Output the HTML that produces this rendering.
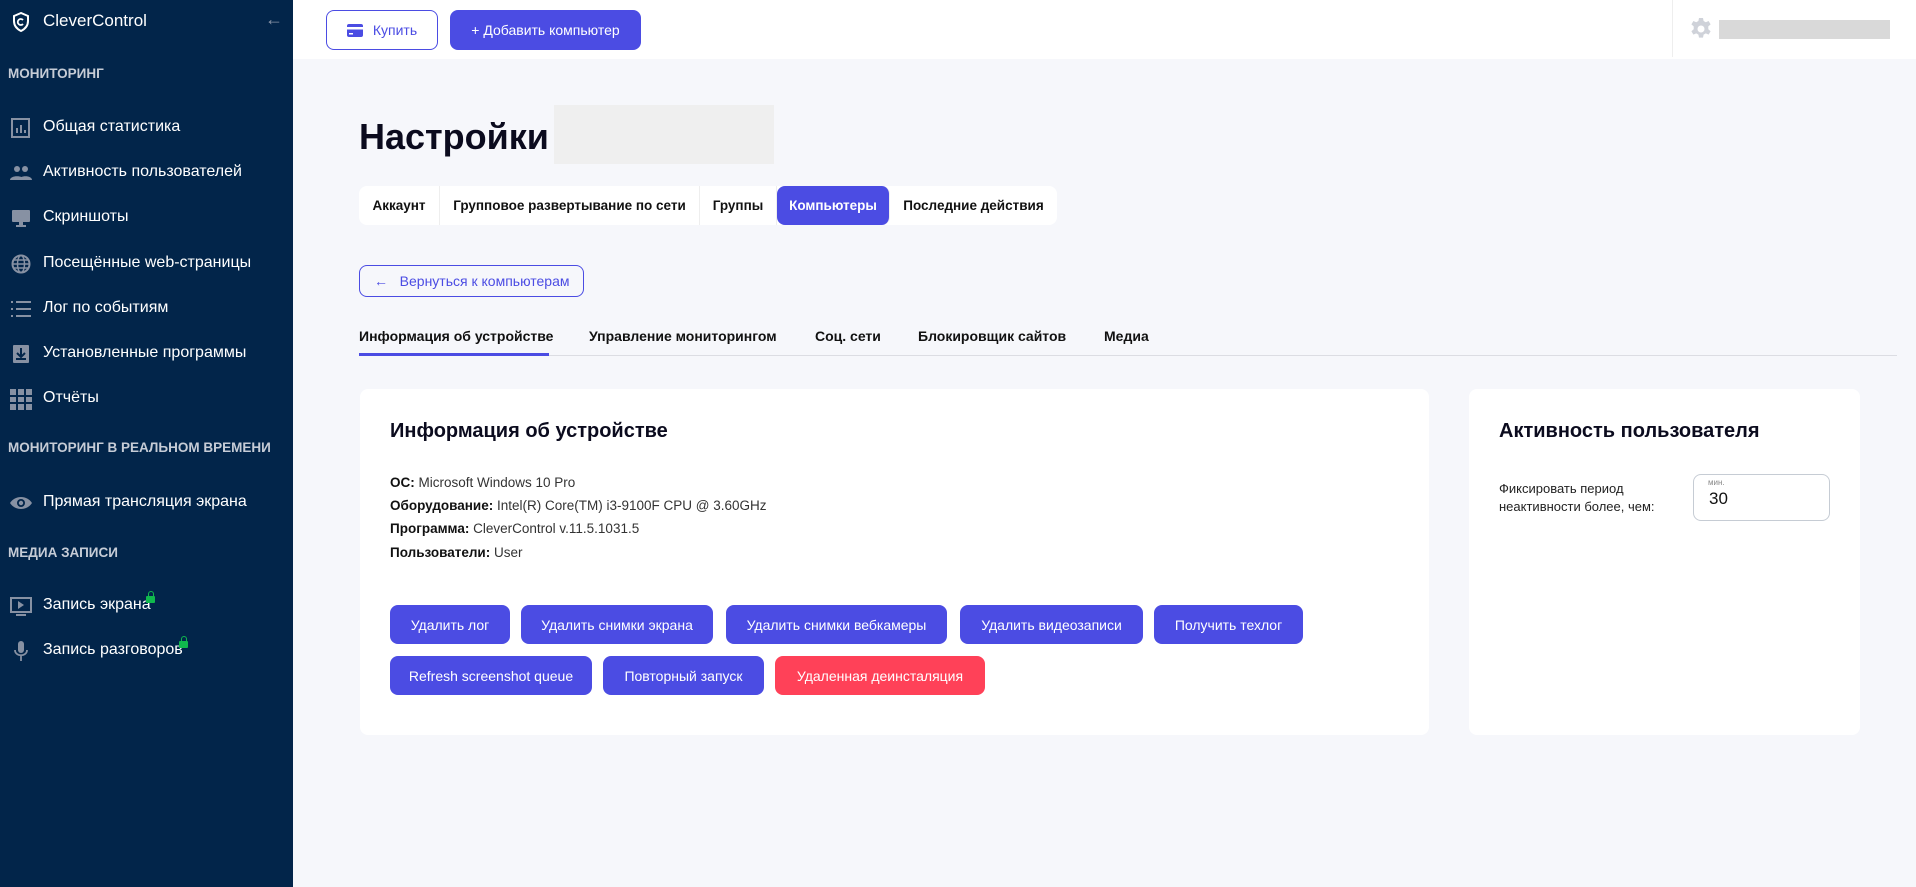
<!DOCTYPE html>
<html><head><meta charset="utf-8"><style>
*{box-sizing:border-box;margin:0;padding:0}
body{width:1916px;height:887px;overflow:hidden;font-family:"Liberation Sans",sans-serif;background:#f6f7fb;position:relative;color:#111}
.abs{position:absolute}
#sb{left:0;top:0;width:293px;height:887px;background:#02254a;color:#fff}
.sec{position:absolute;left:8px;font-size:13.5px;font-weight:bold;color:#c6ccd6;white-space:nowrap}
.it{position:absolute;left:0;font-size:16px;color:#fff;display:flex;align-items:center}
.it svg{position:absolute;left:10px;width:22px;height:22px;top:-9px}
.it span{position:absolute;left:43px;white-space:nowrap;top:-8px}
.lock{position:absolute;width:9px;height:7px;background:#10b94d;border-radius:1px}
.lock:before{content:"";position:absolute;left:1.5px;top:-5px;width:6px;height:6px;border:1.5px solid #10b94d;border-bottom:none;border-radius:3px 3px 0 0;box-sizing:border-box}
#top{left:293px;top:0;width:1623px;height:59px;background:#fff}
.btn{position:absolute;border-radius:8px;background:#4b4ce3;color:#fff;font-size:14px;display:flex;align-items:center;justify-content:center;white-space:nowrap}
.tabs{left:359px;top:186px;height:39px;background:#fff;border-radius:8px;display:flex;font-size:13.5px;font-weight:bold}
.tabs div{display:flex;align-items:center;justify-content:center;border-right:1px solid #eee;white-space:nowrap}
.card{background:#fff;border-radius:8px}
.sub{position:absolute;top:328px;font-size:14px;font-weight:bold;color:#111;white-space:nowrap}
.info{position:absolute;left:390px;font-size:13.5px;color:#333}
.info b{color:#111}
</style></head><body>
<div id="sb" class="abs">
 <svg class="abs" style="left:12px;top:12px" width="18" height="20" viewBox="0 0 18 20"><path d="M9 1L2 4v5c0 5 3 8 7 10 4-2 7-5 7-10V4z" fill="none" stroke="#fff" stroke-width="2"/><path d="M11 8a3 3 0 1 0 0 4" fill="none" stroke="#fff" stroke-width="1.8"/></svg>
 <div class="abs" style="left:43px;top:11px;font-size:17px">CleverControl</div>
 <div class="abs" style="left:265px;top:9px;font-size:18px;color:#8a95a8">←</div>
 <div class="sec" style="top:66px">МОНИТОРИНГ</div>
 <div class="it" style="top:126px"><svg viewBox="0 0 22 22"><rect x="2" y="2" width="17" height="18" fill="none" stroke="#8791a3" stroke-width="2"/><path d="M7 16v-5M11 16V8M15 16v-3" stroke="#8791a3" stroke-width="2"/></svg><span>Общая статистика</span></div>
 <div class="it" style="top:171px"><svg viewBox="0 0 22 22"><circle cx="7" cy="7" r="3" fill="#8791a3"/><circle cx="15" cy="7" r="3" fill="#8791a3"/><path d="M0 18c0-5 14-5 14 0zM9 18c0-5 13-5 13 0z" fill="#8791a3"/></svg><span>Активность пользователей</span></div>
 <div class="it" style="top:216px"><svg viewBox="0 0 22 22"><rect x="2" y="3" width="18" height="12" rx="1" fill="#8791a3"/><rect x="9" y="15" width="4" height="3" fill="#8791a3"/><rect x="6" y="18" width="10" height="2" fill="#8791a3"/></svg><span>Скриншоты</span></div>
 <div class="it" style="top:262px"><svg viewBox="0 0 22 22"><circle cx="11" cy="11" r="8.5" fill="none" stroke="#8791a3" stroke-width="2"/><ellipse cx="11" cy="11" rx="3.5" ry="8.5" fill="none" stroke="#8791a3" stroke-width="1.5"/><path d="M3 11h16M4 7h14M4 15h14" stroke="#8791a3" stroke-width="1.5"/></svg><span>Посещённые web-страницы</span></div>
 <div class="it" style="top:307px"><svg viewBox="0 0 22 22"><path d="M1 4h2M6 4h15M1 11h2M6 11h15M1 18h2M6 18h15" stroke="#8791a3" stroke-width="2"/></svg><span>Лог по событиям</span></div>
 <div class="it" style="top:352px"><svg viewBox="0 0 22 22"><rect x="3" y="2" width="16" height="18" rx="1" fill="#8791a3"/><path d="M11 5v8M7 10l4 4 4-4" stroke="#02254a" stroke-width="2" fill="none"/><rect x="6" y="15" width="10" height="2" fill="#02254a"/></svg><span>Установленные программы</span></div>
 <div class="it" style="top:397px"><svg viewBox="0 0 22 22"><g fill="#8791a3"><rect x="0" y="1" width="6" height="6"/><rect x="8" y="1" width="6" height="6"/><rect x="16" y="1" width="6" height="6"/><rect x="0" y="9" width="6" height="5"/><rect x="8" y="9" width="6" height="5"/><rect x="16" y="9" width="6" height="5"/><rect x="0" y="16" width="6" height="6"/><rect x="8" y="16" width="6" height="6"/><rect x="16" y="16" width="6" height="6"/></g></svg><span>Отчёты</span></div>
 <div class="sec" style="top:440px">МОНИТОРИНГ В РЕАЛЬНОМ ВРЕМЕНИ</div>
 <div class="it" style="top:501px"><svg viewBox="0 0 22 22"><path d="M0 11c5-8 17-8 22 0-5 8-17 8-22 0z" fill="#8791a3"/><circle cx="11" cy="11" r="4" fill="#02254a"/><circle cx="11" cy="11" r="2.2" fill="#8791a3"/></svg><span>Прямая трансляция экрана</span></div>
 <div class="sec" style="top:545px">МЕДИА ЗАПИСИ</div>
 <div class="it" style="top:604px"><svg viewBox="0 0 22 22"><rect x="1" y="3" width="20" height="14" fill="none" stroke="#8791a3" stroke-width="2"/><path d="M8 6v8l6-4z" fill="#8791a3"/><rect x="6" y="19" width="10" height="2" fill="#8791a3"/></svg><span>Запись экрана</span></div>
 <div class="lock" style="left:146px;top:596px"></div>
 <div class="it" style="top:649px"><svg viewBox="0 0 22 22"><rect x="8" y="1" width="6" height="12" rx="3" fill="#8791a3"/><path d="M5 10c0 7 12 7 12 0M11 16v5" stroke="#8791a3" stroke-width="1.8" fill="none"/></svg><span>Запись разговоров</span></div>
 <div class="lock" style="left:179px;top:641px"></div>
</div>
<div id="top" class="abs">
 <div class="btn" style="left:33px;top:10px;width:112px;height:40px;background:#fff;border:1.5px solid #4b4ce3;color:#4b4ce3"><svg width="16" height="13" viewBox="0 0 16 13" style="margin-right:10px"><rect width="16" height="13" rx="2" fill="#4b4ce3"/><rect y="3" width="16" height="2.5" fill="#fff"/><rect x="2" y="9" width="4" height="1.5" fill="#fff"/></svg>Купить</div>
 <div class="btn" style="left:157px;top:10px;width:191px;height:40px">+ Добавить компьютер</div>
 <div class="abs" style="left:1379px;top:0;width:1px;height:57px;background:#eee"></div>
 <svg class="abs" style="left:1396px;top:17px" width="24" height="24" viewBox="0 0 24 24"><path fill="#cfd2d9" d="M10 1h4l.6 3 2.2 1.2 2.8-1.2 2 3.4-2.3 2v2.8l2.3 2-2 3.4-2.8-1.2-2.2 1.2-.6 3h-4l-.6-3-2.2-1.2-2.8 1.2-2-3.4 2.3-2V9.4l-2.3-2 2-3.4 2.8 1.2L9.4 4z"/><circle cx="12" cy="12" r="3.5" fill="#fff"/></svg>
 <div class="abs" style="left:1426px;top:20px;width:171px;height:19px;background:#d9d9d9"></div>
</div>
<div class="abs" style="left:359px;top:116px;font-size:36px;font-weight:bold;color:#0b0b1e">Настройки</div>
<div class="abs" style="left:554px;top:105px;width:220px;height:59px;background:#efefef"></div>
<div class="tabs abs">
 <div style="width:81px">Аккаунт</div><div style="width:260px">Групповое развертывание по сети</div><div style="width:77px">Группы</div>
 <div style="width:113px;background:#4b4ce3;color:#fff;border-radius:8px">Компьютеры</div><div style="width:167px;border:none">Последние действия</div>
</div>
<div class="abs" style="left:359px;top:265px;width:225px;height:32px;border:1.5px solid #4b4ce3;border-radius:8px;color:#4b4ce3;font-size:14px;display:flex;align-items:center;padding-left:14px;white-space:nowrap">←&nbsp;&nbsp;&nbsp;Вернуться к компьютерам</div>
<div class="sub" style="left:359px">Информация об устройстве</div>
<div class="sub" style="left:589px">Управление мониторингом</div>
<div class="sub" style="left:815px">Соц. сети</div>
<div class="sub" style="left:918px">Блокировщик сайтов</div>
<div class="sub" style="left:1104px">Медиа</div>
<div class="abs" style="left:359px;top:355px;width:1538px;height:1px;background:#dcdde3"></div>
<div class="abs" style="left:359px;top:353px;width:190px;height:3px;background:#4b4ce3"></div>
<div class="card abs" style="left:360px;top:389px;width:1069px;height:346px"></div>
<div class="card abs" style="left:1469px;top:389px;width:391px;height:346px"></div>
<div class="abs" style="left:390px;top:420px;font-size:20px;font-weight:bold;color:#0b0b1e">Информация об устройстве</div>
<div class="info" style="top:475px"><b>ОС:</b> Microsoft Windows 10 Pro</div>
<div class="info" style="top:498px"><b>Оборудование:</b> Intel(R) Core(TM) i3-9100F CPU @ 3.60GHz</div>
<div class="info" style="top:521px"><b>Программа:</b> CleverControl v.11.5.1031.5</div>
<div class="info" style="top:545px"><b>Пользователи:</b> User</div>
<div class="btn" style="left:390px;top:605px;width:120px;height:39px">Удалить лог</div>
<div class="btn" style="left:521px;top:605px;width:192px;height:39px">Удалить снимки экрана</div>
<div class="btn" style="left:726px;top:605px;width:221px;height:39px">Удалить снимки вебкамеры</div>
<div class="btn" style="left:960px;top:605px;width:183px;height:39px">Удалить видеозаписи</div>
<div class="btn" style="left:1154px;top:605px;width:149px;height:39px">Получить техлог</div>
<div class="btn" style="left:390px;top:656px;width:202px;height:39px">Refresh screenshot queue</div>
<div class="btn" style="left:603px;top:656px;width:161px;height:39px">Повторный запуск</div>
<div class="btn" style="left:775px;top:656px;width:210px;height:39px;background:#ff4158">Удаленная деинсталяция</div>
<div class="abs" style="left:1499px;top:420px;font-size:20px;font-weight:bold;color:#0b0b1e">Активность пользователя</div>
<div class="abs" style="left:1499px;top:480px;font-size:13px;line-height:18px;color:#222">Фиксировать период<br>неактивности более, чем:</div>
<div class="abs" style="left:1693px;top:474px;width:137px;height:47px;border:1px solid #c6ccd4;border-radius:8px"><div class="abs" style="left:14px;top:3px;font-size:8px;color:#888">мин.</div><div class="abs" style="left:15px;top:14px;font-size:17px">30</div></div>
</body></html>
